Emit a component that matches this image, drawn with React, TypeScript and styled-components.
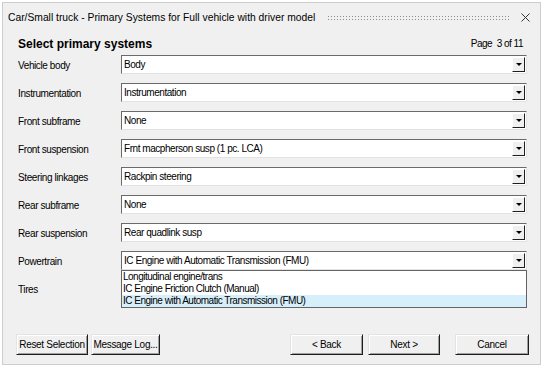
import React from "react";
import styled, { createGlobalStyle } from "styled-components";

const GlobalStyle = createGlobalStyle`
  html, body {
    margin: 0;
    padding: 0;
    background: #ffffff;
  }
  body {
    font-family: "Liberation Sans", Arial, sans-serif;
    color: #000;
  }
`;

const Window = styled.div`
  box-sizing: border-box;
  width: 539px;
  height: 363px;
  margin: 2px 0 0 2px;
  border: 1px solid #cdcdcd;
  background: #f0f0f0;
  display: flex;
  flex-direction: column;
`;

const TitleBar = styled.div`
  height: 29px;
  display: flex;
  align-items: center;
  padding: 0 10px 0 5px;
  font-size: 10.3px;
`;

const TitleText = styled.span`
  white-space: nowrap;
`;

const Gripper = styled.div`
  flex: 1;
  height: 6px;
  margin: 0 12px 0 12px;
  background-image: radial-gradient(circle, #8c8c8c 0.7px, transparent 1px);
  background-size: 3px 3px;
`;

const CloseIcon = () => (
  <svg width="9" height="9" viewBox="0 0 9 9">
    <path d="M0.5 0.5 L8.5 8.5 M8.5 0.5 L0.5 8.5" stroke="#333" strokeWidth="1" />
  </svg>
);

const Body = styled.div`
  flex: 1;
  display: flex;
  flex-direction: column;
  padding: 4px 13px 9px 15px;
`;

const Header = styled.div`
  height: 14px;
  display: flex;
  align-items: center;
  justify-content: space-between;
  padding-right: 4px;
`;

const Heading = styled.div`
  font-size: 12px;
  font-weight: bold;
  margin-top: 2px;
`;

const PageInfo = styled.div`
  font-size: 10px;
  letter-spacing: -0.5px;
`;

const Row = styled.div`
  height: 28px;
  display: flex;
  align-items: flex-start;
`;

const Label = styled.div`
  width: 103px;
  padding-top: 2px;
  line-height: 28px;
  font-size: 10px;
  letter-spacing: -0.4px;
  white-space: nowrap;
`;

const Combo = styled.div`
  position: relative;
  box-sizing: border-box;
  flex: 1;
  height: 19px;
  margin-top: 5px;
  display: flex;
  background: #fff;
  border: 1px solid;
  border-color: #6a6a6a #e3e3e3 #e3e3e3 #6a6a6a;
`;

const ComboValue = styled.div`
  flex: 1;
  padding-left: 2px;
  line-height: 17px;
  font-size: 10px;
  letter-spacing: -0.45px;
  white-space: nowrap;
`;

const DropButton = styled.div`
  box-sizing: border-box;
  width: 13px;
  margin: 1px 1px 1px 0;
  display: flex;
  align-items: center;
  justify-content: center;
  background: #f0f0f0;
  border: 1px solid;
  border-color: #ffffff #1e1e1e #1e1e1e #ffffff;
`;

const Arrow = styled.div`
  width: 0;
  height: 0;
  border-left: 3px solid transparent;
  border-right: 3px solid transparent;
  border-top: 3px solid #000;
`;

const DropList = styled.div`
  position: absolute;
  z-index: 2;
  top: calc(100% + 1px);
  left: -1px;
  right: -1px;
  box-sizing: border-box;
  background: #fff;
  border: 1px solid #646464;
`;

const DropItem = styled.div<{ $selected?: boolean }>`
  height: 12px;
  line-height: 12px;
  padding-left: 1px;
  font-size: 10px;
  letter-spacing: -0.5px;
  white-space: nowrap;
  background: ${(p) => (p.$selected ? "#d6effa" : "transparent")};
`;

const Footer = styled.div`
  margin: auto -2px 0 -2px;
  height: 21px;
  display: flex;
`;

const Button = styled.div<{ $width: number; $gap?: number }>`
  box-sizing: border-box;
  width: ${(p) => p.$width}px;
  height: 21px;
  margin-left: ${(p) => p.$gap ?? 0}px;
  display: flex;
  align-items: center;
  justify-content: center;
  font-size: 10px;
  letter-spacing: -0.3px;
  white-space: nowrap;
  background: #f0f0f0;
  border: 1px solid;
  border-color: #e3e3e3 #1e1e1e #1e1e1e #e3e3e3;
  box-shadow: inset 1px 1px 0 #ffffff, inset -1px -1px 0 #a0a0a0;
`;

const Spacer = styled.div`
  flex: 1;
`;

type SystemRow = { label: string; value: string; options?: string[] };

const rows: SystemRow[] = [
  { label: "Vehicle body", value: "Body" },
  { label: "Instrumentation", value: "Instrumentation" },
  { label: "Front subframe", value: "None" },
  { label: "Front suspension", value: "Frnt macpherson susp (1 pc. LCA)" },
  { label: "Steering linkages", value: "Rackpin steering" },
  { label: "Rear subframe", value: "None" },
  { label: "Rear suspension", value: "Rear quadlink susp" },
  {
    label: "Powertrain",
    value: "IC Engine with Automatic Transmission (FMU)",
    options: [
      "Longitudinal engine/trans",
      "IC Engine Friction Clutch (Manual)",
      "IC Engine with Automatic Transmission (FMU)",
    ],
  },
];

export default function App() {
  return (
    <>
      <GlobalStyle />
      <Window>
        <TitleBar>
          <TitleText>Car/Small truck - Primary Systems for Full vehicle with driver model</TitleText>
          <Gripper />
          <CloseIcon />
        </TitleBar>
        <Body>
          <Header>
            <Heading>Select primary systems</Heading>
            <PageInfo>Page&nbsp; 3 of 11</PageInfo>
          </Header>
          {rows.map((r) => (
            <Row key={r.label}>
              <Label>{r.label}</Label>
              <Combo>
                <ComboValue>{r.value}</ComboValue>
                <DropButton>
                  <Arrow />
                </DropButton>
                {r.options && (
                  <DropList>
                    {r.options.map((o) => (
                      <DropItem key={o} $selected={o === r.value}>
                        {o}
                      </DropItem>
                    ))}
                  </DropList>
                )}
              </Combo>
            </Row>
          ))}
          <Row>
            <Label>Tires</Label>
          </Row>
          <Footer>
            <Button $width={72}>Reset Selection</Button>
            <Button $width={69} $gap={3}>Message Log...</Button>
            <Spacer />
            <Button $width={73}>&lt; Back</Button>
            <Button $width={72} $gap={5}>Next &gt;</Button>
            <Button $width={74} $gap={15}>Cancel</Button>
          </Footer>
        </Body>
      </Window>
    </>
  );
}
